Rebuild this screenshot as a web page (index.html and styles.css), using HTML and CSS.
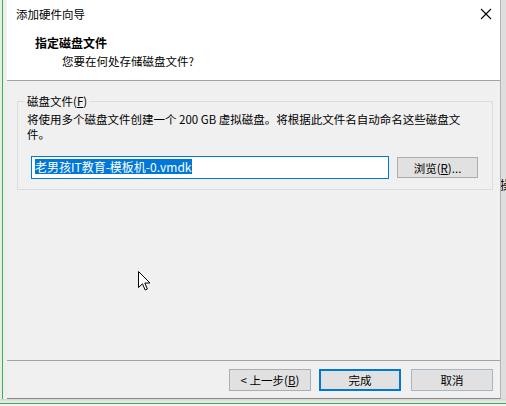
FILE: index.html
```html
<!DOCTYPE html>
<html lang="zh-CN">
<head>
<meta charset="utf-8">
<title>添加硬件向导</title>
<link rel="stylesheet" href="styles.css">
</head>
<body>
<div class="screen">
  <div class="top">
    <div class="gutter-left"></div>
    <div class="dialog">
      <div class="header">
        <div class="titlebar">
          <span class="title">添加硬件向导</span>
          <svg class="close" width="12" height="12" viewBox="0 0 12 12"><path d="M1 1 L11 11 M11 1 L1 11" stroke="#000" stroke-width="1.1" fill="none"/></svg>
        </div>
        <div class="heading">指定磁盘文件</div>
        <div class="subtitle">您要在何处存储磁盘文件?</div>
      </div>
      <div class="content">
        <fieldset class="group">
          <legend class="legend">磁盘文件(<u>F</u>)</legend>
          <p class="desc">将使用多个磁盘文件创建一个 200 GB 虚拟磁盘。将根据此文件名自动命名这些磁盘文件。</p>
          <div class="filerow">
            <div class="field"><span class="sel">老男孩IT教育-模板机-0.vmdk</span></div>
            <div class="btn browse">浏览(<u>R</u>)...</div>
          </div>
        </fieldset>
        <svg class="cursor" width="14" height="21" viewBox="0 0 14 21"><path d="M0.5 0.5 L0.5 16.5 L4.5 12.8 L7.2 19 L9.4 18 L6.8 12 L12 12 Z" fill="#fff" stroke="#000" stroke-width="1" stroke-linejoin="miter"/></svg>
      </div>
      <div class="footer">
        <div class="btn back">&lt; 上一步(<u>B</u>)</div>
        <div class="btn finish">完成</div>
        <div class="btn cancel">取消</div>
      </div>
    </div>
    <div class="gutter-right"><span class="peek">操</span></div>
  </div>
  <div class="bottom"></div>
</div>
</body>
</html>
```
FILE: styles.css
```css
html, body {
  margin: 0;
  padding: 0;
}
body {
  width: 506px;
  height: 406px;
  overflow: hidden;
  background: #ececec;
  font-family: "Noto Sans CJK SC", "Noto Sans", sans-serif;
  font-size: 11.5px;
  color: #000;
}
.screen {
  display: flex;
  flex-direction: column;
  height: 406px;
}
.top {
  display: flex;
  height: 399px;
}
.gutter-left {
  width: 7px;
  flex: none;
  background: linear-gradient(to right, #e6efe6 0, #e6efe6 2px, #3dae48 2px, #3dae48 3px, #eeeeee 3px);
}
.dialog {
  width: 493px;
  flex: none;
  display: flex;
  flex-direction: column;
  border-right: 1px solid #b4b4b4;
  border-bottom: 1px solid #8a8a8a;
  background: #f0f0f0;
  position: relative;
}
.gutter-right {
  flex: 1;
  background: #dedede;
  overflow: hidden;
  padding-top: 177px;
}
.peek {
  display: block;
  font-size: 12px;
  line-height: 16px;
  margin-left: -1px;
}
.header {
  height: 80px;
  background: #fff;
  border-bottom: 1px solid #a3a3a3;
  display: flex;
  flex-direction: column;
}
.titlebar {
  height: 28px;
  display: flex;
  align-items: center;
  justify-content: space-between;
  padding: 0 8px 0 9px;
}
.title {
  line-height: 16px;
}
.close {
  margin-top: -1px;
}
.heading {
  margin-top: 7px;
  padding-left: 28px;
  font-weight: bold;
  font-size: 12px;
  line-height: 16px;
}
.subtitle {
  margin-top: 2px;
  padding-left: 55px;
  line-height: 16px;
}
.content {
  border-bottom: 1px solid #a3a3a3;
  padding: 12px 0 0 10px;
  box-sizing: border-box;
  height: 280px;
  position: relative;
}
.group {
  margin: 0;
  width: 476px;
  box-sizing: border-box;
  border: 1px solid #dcdcdc;
  padding: 3px 9px 10px 9px;
}
.legend {
  padding: 0 2px;
  margin-left: -2px;
  line-height: 16px;
}
.desc {
  margin: 0;
  width: 456px;
  line-height: 15px;
}
.filerow {
  display: flex;
  align-items: center;
  gap: 8px;
  margin-top: 14px;
  padding-left: 4px;
}
.field {
  width: 358px;
  height: 23px;
  box-sizing: border-box;
  border: 1px solid #0078d7;
  background: #fff;
  padding: 2px 0 0 3px;
  display: flex;
  align-items: flex-start;
}
.sel {
  background: #0078d7;
  color: #fff;
  line-height: 15px;
  font-size: 12px;
  padding-right: 1px;
}
.btn {
  box-sizing: border-box;
  background: #e1e1e1;
  border: 1px solid #adadad;
  display: flex;
  align-items: center;
  justify-content: center;
  line-height: 16px;
}
.browse {
  width: 81px;
  height: 21px;
}
.footer {
  flex: 1;
  display: flex;
  justify-content: flex-end;
  align-items: flex-start;
  padding: 8px 7px 0 0;
  gap: 8px;
}
.back {
  width: 82px;
  height: 22px;
}
.finish {
  width: 82px;
  height: 22px;
  border: 2px solid #0078d7;
  margin-right: 2px;
}
.cancel {
  width: 82px;
  height: 22px;
  border-color: #a9b6c4;
}
.cursor {
  position: absolute;
  left: 131px;
  top: 190px;
}
.bottom {
  height: 7px;
  background: linear-gradient(to bottom, #d4d4d4 0, #e9e9e9 3px, #e9e9e9 4px, #3dae48 4px, #3dae48 5px, #f2f2f2 5px);
}
```
